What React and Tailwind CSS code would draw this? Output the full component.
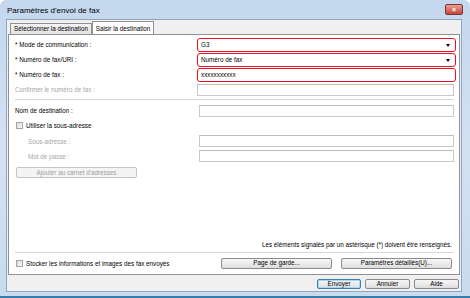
const font = { fontFamily: '"Liberation Sans", "DejaVu Sans", sans-serif' };

function RedField({ value, arrow = false }) {
    return (
        <div className="flex h-[14px] flex-1 items-center rounded-[3px] border-[1.5px] border-[#e8101c] bg-white pl-[3px] pr-[5px]">
            <span className="flex-1 text-[6.3px] text-black">{value}</span>
            {arrow && (
                <span className="h-0 w-0 border-x-[2.5px] border-t-[3px] border-x-transparent border-t-black" />
            )}
        </div>
    );
}

function Field() {
    return <div className="h-[12px] flex-1 border border-[#c9c9c9] border-t-[#bdbdbd] bg-white" />;
}

function Check({ label }) {
    return (
        <div className="flex items-center gap-[3px]">
            <span className="h-[7px] w-[7px] border border-[#a3a3a3] bg-gradient-to-br from-[#dcdcdc] to-[#f7f7f7]" />
            <span className="text-[6.3px] text-black">{label}</span>
        </div>
    );
}

function Button({ children, className = '', primary = false }) {
    return (
        <div
            className={`flex items-center justify-center rounded-[2px] border bg-gradient-to-b from-[#f6f6f6] via-[#ececec] to-[#dcdcdc] text-[6.3px] leading-none text-black ${
                primary ? 'border-[#3c7fb1] shadow-[inset_0_0_0_1px_#a8d8f0]' : 'border-[#8a8a8a]'
            } ${className}`}
        >
            {children}
        </div>
    );
}

export default function App() {
    return (
        <div
            className="flex h-[298px] w-[470px] flex-col overflow-hidden rounded-t-[6px] border-b-2 border-[#3a7aa8] bg-gradient-to-b from-[#c3d7ee] via-[#d3e2f3] to-[#c8dbef]"
            style={font}
        >
            <div className="flex h-[19px] shrink-0 items-center justify-between pl-[7px] pr-[7px]">
                <span className="mt-[2px] text-[8px] text-black">Paramètres d'envoi de fax</span>
                <div className="flex h-[11px] w-[18px] items-center justify-center rounded-[2px] border border-[#7a3434] bg-gradient-to-b from-[#e8a090] to-[#c2453a] text-[7px] font-bold leading-none text-white">
                    ×
                </div>
            </div>

            <div className="ml-[6px] mr-[8px] flex h-[273px] shrink-0 flex-col border border-[#8fa6c2] bg-[#f0f0f0] px-[1px]">
                <div className="flex h-[14px] shrink-0 items-end pl-[2px] pt-[1px]">
                    <div className="flex h-[11px] w-[82px] items-center justify-center border border-b-0 border-[#919191] bg-gradient-to-b from-[#f4f4f4] to-[#e3e3e3] text-[6.3px] text-black">
                        Sélectionner la destination
                    </div>
                    <div className="mb-[-1px] flex h-[14px] w-[62px] items-start justify-center border border-b-0 border-[#919191] bg-white pt-[2px] text-[6.3px] text-black">
                        Saisir la destination
                    </div>
                </div>

                <div className="flex h-[241px] shrink-0 flex-col border border-[#919191] bg-white pl-[6px] pr-[3px]">
                    <div className="mt-[3px] flex items-center">
                        <span className="w-[182px] text-[6.3px] text-black">* Mode de communication :</span>
                        <RedField value="G3" arrow />
                    </div>
                    <div className="mt-[1px] flex items-center">
                        <span className="w-[182px] text-[6.3px] text-black">* Numéro de fax/URI :</span>
                        <RedField value="Numéro de fax" arrow />
                    </div>
                    <div className="mt-[1px] flex items-center">
                        <span className="w-[182px] text-[6.3px] text-black">* Numéro de fax :</span>
                        <RedField value="xxxxxxxxxxx" />
                    </div>
                    <div className="mt-[2px] flex items-center pr-[2px]">
                        <span className="w-[182px] text-[6.3px] text-[#a6a6a6]">Confirmer le numéro de fax :</span>
                        <Field />
                    </div>
                    <div className="mr-[2px] mt-[3px] h-px bg-[#d5d5d5]" />

                    <div className="mt-[5px] flex items-center pr-[2px]">
                        <span className="w-[184px] text-[6.3px] text-black">Nom de destination :</span>
                        <Field />
                    </div>
                    <div className="ml-[1px] mt-[4px]">
                        <Check label="Utiliser la sous-adresse" />
                    </div>
                    <div className="mt-[5px] flex items-center pr-[2px]">
                        <span className="w-[184px] pl-[13px] text-[6.3px] text-[#a6a6a6]">Sous-adresse :</span>
                        <Field />
                    </div>
                    <div className="mt-[3px] flex items-center pr-[2px]">
                        <span className="w-[184px] pl-[13px] text-[6.3px] text-[#a6a6a6]">Mot de passe :</span>
                        <Field />
                    </div>
                    <div className="ml-[1px] mt-[5px] flex h-[11px] w-[121px] items-center justify-center rounded-[2px] border border-[#c4c4c4] bg-[#f4f4f4] text-[6.3px] text-[#a0a0a0]">
                        Ajouter au carnet d'adresses
                    </div>

                    <div className="flex-1" />

                    <div className="pr-[4px] text-right text-[6.3px] text-black">
                        Les éléments signalés par un astérisque (*) doivent être renseignés.
                    </div>
                    <div className="mr-[3px] mt-[3px] h-px bg-[#d5d5d5]" />
                    <div className="mb-[5px] mt-[5px] flex items-center pr-[4px]">
                        <div className="ml-[1px] flex-1">
                            <Check label="Stocker les informations et images des fax envoyés" />
                        </div>
                        <Button className="h-[11px] w-[111px]">Page de garde...</Button>
                        <Button className="ml-[9px] h-[11px] w-[111px]">Paramètres détaillés(U)...</Button>
                    </div>
                </div>

                <div className="mt-[4px] flex shrink-0 justify-end gap-[4px] pr-[1px]">
                    <Button primary className="h-[10px] w-[44px]">Envoyer</Button>
                    <Button className="h-[10px] w-[45px]">Annuler</Button>
                    <Button className="h-[10px] w-[45px]">Aide</Button>
                </div>
            </div>
        </div>
    );
}
